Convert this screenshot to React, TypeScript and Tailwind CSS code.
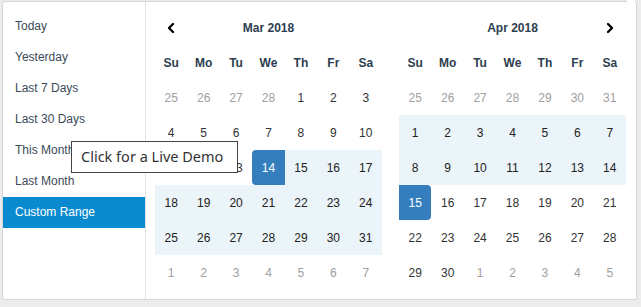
import { ChevronLeft, ChevronRight } from "lucide-react";

type Day = { n: number; off?: boolean; inRange?: boolean; start?: boolean; end?: boolean };

const ranges = ["Today", "Yesterday", "Last 7 Days", "Last 30 Days", "This Month", "Last Month", "Custom Range"];
const weekdays = ["Su", "Mo", "Tu", "We", "Th", "Fr", "Sa"];

function buildMarch(): Day[] {
   const days: Day[] = [];
   [25, 26, 27, 28].forEach(n => days.push({ n, off: true }));
   for (let n = 1; n <= 31; n++) {
      days.push({ n, inRange: n >= 14, start: n === 14 });
   }
   for (let n = 1; n <= 7; n++) days.push({ n, off: true });
   return days;
}

function buildApril(): Day[] {
   const days: Day[] = [];
   for (let n = 25; n <= 31; n++) days.push({ n, off: true });
   for (let n = 1; n <= 30; n++) {
      days.push({ n, inRange: n <= 15, end: n === 15 });
   }
   for (let n = 1; n <= 5; n++) days.push({ n, off: true });
   return days;
}

function DayCell({ day }: { day: Day }) {
   if (day.start || day.end) {
      return (
         <div
            className={`h-[35px] flex items-center justify-center bg-[#357ebd] text-white ${day.start ? "rounded-l-[4px]" : "rounded-r-[4px]"}`}
         >
            {day.n}
         </div>
      );
   }
   return (
      <div
         className={`h-[35px] flex items-center justify-center ${day.off ? "text-[#a0a0a0]" : day.inRange ? "bg-[#ebf4f8] text-[#222]" : "text-[#333]"}`}
      >
         {day.n}
      </div>
   );
}

function Calendar({ title, days, side }: { title: string; days: Day[]; side: "left" | "right" }) {
   return (
      <div className="w-[227px] pt-[8px]">
         <div className="grid grid-cols-7 h-[35px] items-center">
            <div className="flex justify-center">
               {side === "left" && <ChevronLeft size={16} strokeWidth={3.5} className="text-black" />}
            </div>
            <div className="col-span-5 text-center font-bold text-[12px] text-[#2c3e50]">{title}</div>
            <div className="flex justify-center">
               {side === "right" && <ChevronRight size={16} strokeWidth={3.5} className="text-black" />}
            </div>
         </div>
         <div className="grid grid-cols-7 h-[35px] items-center">
            {weekdays.map(w => (
               <div key={w} className="text-center font-bold text-[12px] text-[#2c3e50]">{w}</div>
            ))}
         </div>
         <div className="grid grid-cols-7 text-[12px]">
            {days.map((d, i) => (
               <DayCell key={i} day={d} />
            ))}
         </div>
      </div>
   );
}

export default function App() {
   return (
      <div className="w-[641px] h-[307px] bg-[#ececec] pl-[2px] pt-[1px] relative overflow-hidden" style={{ fontFamily: '"Liberation Sans", Arial, sans-serif' }}>
         <div className="w-[635px] h-[299px] bg-white border border-[#d6d6d6] rounded-[3px] flex relative">
            <ul className="w-[143px] pt-[9px] border-r border-[#e2e2e2]">
               {ranges.map(r => (
                  <li
                     key={r}
                     className={`h-[31px] flex items-center pl-3 pb-[2px] text-[12px] ${r === "Custom Range" ? "bg-[#0a8bcf] text-white" : "text-[#3b4a58]"}`}
                  >
                     {r}
                  </li>
               ))}
            </ul>
            <div className="flex pl-[9px] gap-[17px]">
               <Calendar title="Mar 2018" days={buildMarch()} side="left" />
               <Calendar title="Apr 2018" days={buildApril()} side="right" />
            </div>
            <div className="absolute left-[624px] -top-[2px] w-[8px] h-[3px] bg-white" />
         </div>
         <div
            className="absolute left-[71px] top-[141px] w-[167px] h-[32px] bg-white border border-[#444] flex items-center pl-[9px] text-[14.5px] text-[#333]"
            style={{ fontFamily: '"Noto Sans", "Open Sans", sans-serif' }}
         >
            Click for a Live Demo
         </div>
      </div>
   );
}
